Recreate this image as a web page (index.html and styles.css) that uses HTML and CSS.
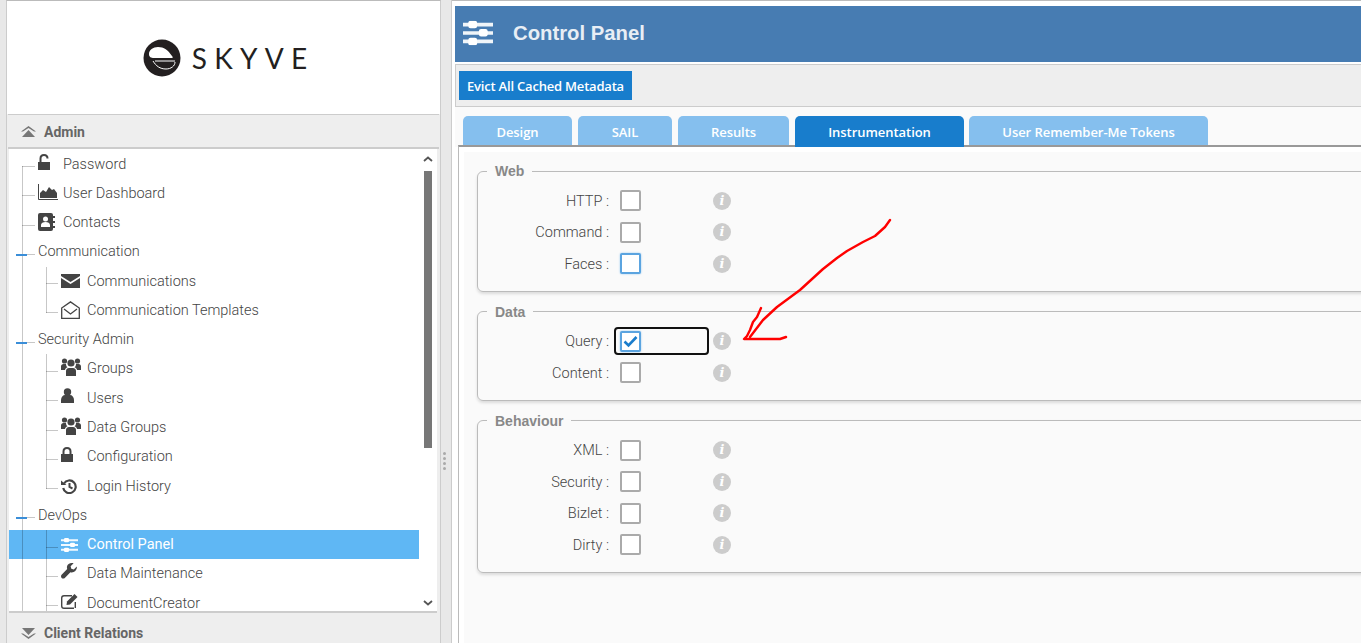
FILE: index.html
```html
<!DOCTYPE html>
<html>
<head>
  <title>Control Panel</title>
  <link rel="stylesheet" href="styles.css">
</head>
<body>
  <div class="page">
    <div class="sidebar">
      <div class="logo-box">
        <svg class="logo-mark" width="38" height="38" viewBox="0 0 38 38">
          <circle cx="19" cy="19" r="18.500" fill="#231f20"/>
          <path d="M6 15c0-4 4-7 9-7 6 0 10 3 14 9 1 1 1 2 0 2H11c-3 0-5-1-5-4z" fill="#fff"/>
          <path d="M32 23c0 4-4 7-9 7-6 0-10-3-13-8" fill="none" stroke="#fff" stroke-width="1"/>
          <path d="M12 22h20" stroke="#fff" stroke-width="1"/>
        </svg>
        <span class="logo-text">SKYVE</span>
      </div>

      <div class="acc-head">
        <svg width="15" height="12" viewBox="0 0 15 12"><path d="M7.500 0L15 5.500h-2L7.500 2 2 5.500H0z M7.500 4L14 11H1z" fill="#777"/></svg>
        <span>Admin</span>
      </div>

      <div class="tree-wrap">
        <div class="tree">
          <div class="row top"><span class="slot"><svg class="ic-unlock" width="13" height="16" viewBox="0 0 13 16"><path d="M0 8h12v8H0z" fill="#444"/><path d="M2.500 8V4.500C2.500 2.500 4 1 6 1s3.500 1.500 3.500 3.500" fill="none" stroke="#444" stroke-width="2"/></svg></span>Password</div>
          <div class="row top"><span class="slot"><svg class="ic-chart" width="20" height="16" viewBox="0 0 20 16"><path d="M.5 0v15.500H20" fill="none" stroke="#444" stroke-width="1"/><path d="M2 14V9l3-3 3 2 3-5 3 3 2-1 3 4v5z" fill="#444"/></svg></span>User Dashboard</div>
          <div class="row top"><span class="slot"><svg class="ic-book" width="17" height="18" viewBox="0 0 17 18"><rect width="15" height="18" rx="2" fill="#444"/><path d="M15 3h2v2h-2zM15 8h2v2h-2zM15 13h2v2h-2z" fill="#444"/><circle cx="7.500" cy="6" r="2.500" fill="#fff"/><path d="M3 14v-2c0-2 2-3 4.500-3s4.500 1 4.500 3v2z" fill="#fff"/></svg></span>Contacts</div>

          <div class="row group">Communication</div>
          <div class="sub">
            <div class="row"><span class="slot"><svg class="ic-mail" width="19" height="14" viewBox="0 0 19 14"><path d="M0 0h19v2L9.500 8 0 2z" fill="#444"/><path d="M0 4l9.500 6L19 4v10H0z" fill="#444"/></svg></span>Communications</div>
            <div class="row"><span class="slot"><svg class="ic-open" width="19" height="18" viewBox="0 0 19 18"><path d="M.7 7L9.500.9 18.300 7v10.300H.7z" fill="none" stroke="#444" stroke-width="1.300"/><path d="M3 8l6.500 5L16 8" fill="none" stroke="#444" stroke-width="1.300"/></svg></span>Communication Templates</div>
          </div>

          <div class="row group">Security Admin</div>
          <div class="sub">
            <div class="row"><span class="slot"><svg class="ic-users" width="20" height="19" viewBox="0 0 20 19"><use href="#users"/></svg></span>Groups</div>
            <div class="row"><span class="slot"><svg class="ic-user" width="13" height="15" viewBox="0 0 13 15"><circle cx="6.500" cy="4" r="3.700" fill="#444"/><path d="M0 15v-3c0-3 2-5 4-5h5c2 0 4 2 4 5v3z" fill="#444"/></svg></span>Users</div>
            <div class="row"><span class="slot"><svg class="ic-users" width="20" height="19" viewBox="0 0 20 19"><use href="#users"/></svg></span>Data Groups</div>
            <div class="row"><span class="slot"><svg class="ic-lock" width="12" height="15" viewBox="0 0 12 15"><path d="M0 7h12v8H0z" fill="#444"/><path d="M2.500 7V4.500C2.500 2.500 4 1 6 1s3.500 1.500 3.500 3.500V7" fill="none" stroke="#444" stroke-width="2"/></svg></span>Configuration</div>
            <div class="row"><span class="slot"><svg class="ic-history" width="16" height="15" viewBox="0 0 16 15"><path d="M3 4.500a6.300 6.300 0 1 1-.8 4.500" fill="none" stroke="#444" stroke-width="2.200"/><path d="M0 1.500l5.500 4.500H0z" fill="#444"/><path d="M8.500 4v4l3 1.500" fill="none" stroke="#444" stroke-width="2"/></svg></span>Login History</div>
          </div>

          <div class="row group">DevOps</div>
          <div class="sub open">
            <div class="row selected"><span class="slot"><svg class="ic-sliders" width="17" height="14" viewBox="0 0 34 28"><use href="#sliders"/></svg></span>Control Panel</div>
            <div class="row"><span class="slot"><svg class="ic-wrench" width="16" height="16" viewBox="0 0 16 16"><path d="M15.800 3.500l-3 3-2.500-.7-.7-2.500 3-3C9.500-.5 6.500.8 6 3.500c-.2 1 0 1.800.2 2.600L.6 11.700c-.8.8-.8 2.200 0 3.200.9.900 2.300.9 3.200 0l5.600-5.600c3.500 1 7-2.200 6.400-5.800z" fill="#444"/></svg></span>Data Maintenance</div>
            <div class="row"><span class="slot"><svg class="ic-edit" width="19" height="15" viewBox="0 0 19 15"><path d="M13 14.300H3c-1.300 0-2.300-1-2.300-2.300V4c0-1.300 1-2.300 2.300-2.300h8M14.300 8v6" fill="none" stroke="#444" stroke-width="1.400"/><path d="M6 7.500L13.500 0l3 3L9 10.500l-3.500.5z" fill="#444"/></svg></span>DocumentCreator</div>
          </div>
        </div>
        <div class="scrollbar">
          <svg class="chev" width="10" height="6" viewBox="0 0 10 6"><path d="M1 5l4-3.500L9 5" fill="none" stroke="#555" stroke-width="1.800"/></svg>
          <div class="track"><div class="thumb"></div></div>
          <svg class="chev down" width="10" height="6" viewBox="0 0 10 6"><path d="M1 1l4 3.500L9 1" fill="none" stroke="#555" stroke-width="1.800"/></svg>
        </div>
      </div>

      <div class="acc-head closed">
        <svg width="15" height="12" viewBox="0 0 15 12"><path d="M7.500 12L15 6.500h-2L7.500 10 2 6.500H0z M7.500 8L14 1H1z" fill="#777"/></svg>
        <span>Client Relations</span>
      </div>
    </div>

    <div class="splitter">
      <span></span><span></span><span></span><span></span>
    </div>

    <div class="main">
      <div class="title-bar">
        <svg width="30" height="26" viewBox="0 0 34 28"><use href="#sliders"/></svg>
        <h1>Control Panel</h1>
      </div>
      <div class="toolbar">
        <button class="action-btn">Evict All Cached Metadata</button>
      </div>
      <div class="tabs">
        <div class="tab">Design</div>
        <div class="tab">SAIL</div>
        <div class="tab">Results</div>
        <div class="tab active">Instrumentation</div>
        <div class="tab last">User Remember-Me Tokens</div>
      </div>
      <div class="tab-panel">
        <div class="tab-inner">
          <fieldset class="box">
            <legend>Web</legend>
            <div class="field"><label>HTTP :</label><span class="check"></span><span class="info">i</span></div>
            <div class="field"><label>Command :</label><span class="check"></span><span class="info">i</span></div>
            <div class="field"><label>Faces :</label><span class="check focused"></span><span class="info">i</span></div>
          </fieldset>
          <fieldset class="box">
            <legend>Data</legend>
            <div class="field">
              <label>Query :</label>
              <span class="check focused"><svg width="15" height="13" viewBox="0 0 15 13"><path d="M1.500 6.500l4 4 8-8.500" fill="none" stroke="#1a7dcc" stroke-width="2.600"/></svg></span>
              <span class="info">i</span>
              <span class="focus-ring"></span>
            </div>
            <div class="field"><label>Content :</label><span class="check"></span><span class="info">i</span></div>
          </fieldset>
          <fieldset class="box">
            <legend>Behaviour</legend>
            <div class="field"><label>XML :</label><span class="check"></span><span class="info">i</span></div>
            <div class="field"><label>Security :</label><span class="check"></span><span class="info">i</span></div>
            <div class="field"><label>Bizlet :</label><span class="check"></span><span class="info">i</span></div>
            <div class="field"><label>Dirty :</label><span class="check"></span><span class="info">i</span></div>
          </fieldset>
        </div>
      </div>
    </div>

    <!-- red arrow scribbled on top of the screenshot -->
    <svg class="scribble" width="1361" height="643" viewBox="0 0 1361 643">
      <path d="M890 220L885 227L875 236L863 242L847 251L837 258L823 269L800 290L777 307L763 320L750 337" fill="none" stroke="#f00" stroke-width="2.400" stroke-linejoin="round" stroke-linecap="round"/>
      <path d="M761 308L757 317L753 322L750 330L747 336L744 339L780 339L786 337" fill="none" stroke="#f00" stroke-width="2.400" stroke-linejoin="round" stroke-linecap="round"/>
    </svg>
  </div>

  <svg class="defs" width="0" height="0">
    <defs>
      <symbol id="sliders" viewBox="0 0 34 28">
        <g fill="#fff">
          <path d="M0 2.500h34v4H0zM0 12h34v4H0zM0 21.500h34v4H0z" opacity=".92"/>
          <rect x="6" y="0" width="10" height="8.500" rx="2.500"/>
          <rect x="18" y="9.500" width="10" height="8.500" rx="2.500"/>
          <rect x="6" y="19.500" width="10" height="8.500" rx="2.500"/>
        </g>
      </symbol>
      <symbol id="users" viewBox="0 0 20 19">
        <g fill="#444">
          <circle cx="3.500" cy="4" r="2.600"/>
          <circle cx="16.500" cy="4" r="2.600"/>
          <circle cx="10" cy="6" r="3.600"/>
          <path d="M0 13V9.500C0 8 1 7 2.500 7H5c0 1.500.5 2.500 1.500 3.300C5 11 4 12 4 13zM20 13V9.500C20 8 19 7 17.500 7H15c0 1.500-.5 2.500-1.500 3.300 1.500.7 2.500 1.700 2.500 2.700z"/>
          <path d="M5 19v-5c0-2 1.500-3 3-3h4c1.500 0 3 1 3 3v5z"/>
        </g>
      </symbol>
    </defs>
  </svg>
</body>
</html>
```

FILE: styles.css
```css
html, body {
  margin: 0;
  height: 100%;
  overflow: hidden;
}

body {
  background-color: #e8e8e8;
  font-family: 'Roboto', sans-serif;
}

.defs {
  position: absolute;
}

.page {
  position: relative;
  display: flex;
  width: 1361px;
  height: 643px;
  overflow: hidden;
  padding-left: 6px;
  box-sizing: border-box;
}

/* Left menu */
.sidebar {
  width: 435px;
  height: 643px;
  flex: none;
  display: flex;
  flex-direction: column;
  overflow: hidden;
  box-sizing: border-box;
  border-left: 1px solid #ccc;
  border-right: 1px solid #ccc;
  border-top: 1px solid #bbb;
  background-color: #eee;
}

.logo-box {
  height: 113px;
  flex: none;
  background-color: #fff;
  display: flex;
  align-items: center;
  justify-content: center;
  gap: 11px;
  padding-left: 3px;
}

.logo-text {
  font-family: 'Lato', sans-serif;
  font-size: 28px;
  letter-spacing: 7.300px;
  color: #231f20;
  margin-right: -7.300px;
}

.acc-head {
  height: 35px;
  flex: none;
  margin: 0 1px;
  box-sizing: border-box;
  border-top: 1px solid #ccc;
  border-bottom: 2px solid #ccc;
  background-color: #eee;
  display: flex;
  align-items: center;
  gap: 8px;
  padding-left: 13px;
  padding-top: 1px;
  font-size: 14px;
  font-weight: 700;
  color: #666;
}

.acc-head.closed {
  height: 36px;
  flex: none;
  border: none;
  padding-top: 3px;
}

.tree-wrap {
  height: 464px;
  flex: none;
  box-sizing: border-box;
  margin-left: 2px;
  margin-right: 3px;
  border-bottom: 2px solid #ccc;
  display: flex;
  background-color: #fff;
}

.tree {
  position: relative;
  flex: 1;
  min-width: 0;
  overflow: hidden;
  padding-top: 0.500px;
  font-size: 14.500px;
  font-weight: 300;
  color: #444;
}

/* main vertical connector */
.tree:before {
  content: "";
  position: absolute;
  left: 13px;
  top: 17px;
  bottom: 0;
  width: 1px;
  background-color: rgba(0,0,0,0.22);
  z-index: 1;
}

.row {
  position: relative;
  display: flex;
  align-items: center;
  height: 29.270px;
  padding-left: 29px;
  white-space: nowrap;
}

.row:before {
  content: "";
  position: absolute;
  left: 13px;
  width: 13px;
  top: calc(50% + 2px);
  height: 1px;
  background-color: rgba(0,0,0,0.22);
  z-index: 1;
}

.slot {
  width: 25px;
  height: 100%;
  flex: none;
  display: flex;
  align-items: center;
}

.slot svg {
  display: block;
  margin-top: -5px;
}

.group:after {
  content: "";
  position: absolute;
  left: 7px;
  width: 11px;
  top: calc(50% + 2px);
  height: 2px;
  background-color: #3a8ed8;
  z-index: 2;
}

.sub {
  position: relative;
}

.sub:before {
  content: "";
  position: absolute;
  left: 37px;
  top: 0;
  bottom: 12px;
  width: 1px;
  background-color: rgba(0,0,0,0.22);
  z-index: 1;
}

.sub.open:before {
  bottom: 0;
}

.sub .row {
  padding-left: 52px;
}

.sub .slot {
  width: 26px;
}

.sub .row:before {
  left: 37px;
  width: 12px;
}

.row.selected {
  background-color: #5fb7f4;
  color: #fff;
  font-weight: 400;
}

.ic-chart, .ic-edit {
  margin-top: -3px !important;
}

.ic-book {
  margin-top: -1px !important;
}

.ic-mail, .ic-history, .ic-sliders, .ic-open {
  margin-top: 0 !important;
}

.scrollbar {
  width: 18px;
  flex: none;
  display: flex;
  flex-direction: column;
  align-items: center;
  background-color: #fff;
}

.chev {
  flex: none;
  margin-top: 7px;
  margin-bottom: 9px;
}

.chev.down {
  margin-top: 10px;
  margin-bottom: 5px;
}

.track {
  flex: 1;
  width: 100%;
  display: flex;
  justify-content: center;
}

.thumb {
  width: 8px;
  height: 277px;
  background-color: #777;
}

/* Splitter between menu and content */
.splitter {
  width: 11px;
  flex: none;
  display: flex;
  flex-direction: column;
  align-items: center;
  justify-content: center;
  gap: 2px;
  padding-top: 278px;
  padding-right: 3px;
  box-sizing: border-box;
  border-right: 1px solid #ccc;
}

.splitter span {
  width: 3px;
  height: 3px;
  border-radius: 50%;
  background-color: #aaa;
}

/* Content */
.main {
  flex: 1;
  min-width: 0;
  border-top: 1px solid #bbb;
  background-color: #fff;
  padding-left: 3px;
  padding-top: 5px;
  display: flex;
  flex-direction: column;
}

.title-bar {
  height: 56px;
  flex: none;
  background-color: #477cb2;
  display: flex;
  align-items: center;
  padding-left: 8px;
  padding-bottom: 2px;
  box-sizing: border-box;
  gap: 20px;
}

.title-bar h1 {
  margin: 0;
  font-family: 'Liberation Sans', sans-serif;
  font-size: 20.300px;
  font-weight: 700;
  color: #e8eef5;
}

.toolbar {
  height: 43px;
  flex: none;
  margin-top: 2px;
  box-sizing: border-box;
  border: 1px solid #ccc;
  border-right: none;
  background-color: #eee;
  display: flex;
  align-items: center;
  padding-left: 3px;
}

.action-btn {
  height: 29px;
  border: none;
  padding: 0 8px;
  background-color: #187dcc;
  color: #fff;
  font-family: 'Open Sans', sans-serif;
  font-size: 13px;
  font-weight: 600;
  letter-spacing: -0.200px;
}

.tabs {
  flex: none;
  display: grid;
  grid-template-columns: 109px 94px 111px 169px 238px;
  column-gap: 6px;
  padding: 9px 0 0 8px;
  background-color: #fafafa;
}

.tab {
  height: 31px;
  display: flex;
  align-items: center;
  justify-content: center;
  background-color: #85bfee;
  border-radius: 5px 5px 0 0;
  color: #fff;
  font-family: 'Open Sans', sans-serif;
  font-size: 13px;
  font-weight: 600;
  letter-spacing: -0.050px;
  white-space: nowrap;
}

.tab.last {
  margin-left: -1px;
}

.tab.active {
  background-color: #187dcc;
  position: relative;
  z-index: 1;
}

.tab-panel {
  flex: 1;
  margin-left: 3px;
  margin-top: -2px;
  border-top: 2px solid #999;
  border-left: 1px solid #bbb;
  background-color: #fff;
  padding: 5px 0 0 5px;
}

.tab-inner {
  height: 100%;
  background-color: #fafafa;
  padding: 11px 0 0 13px;
}

.box {
  margin: 0 -20px 12px 0;
  padding: 6px 0 11px 0;
  border: 1px solid #bbb;
  border-radius: 6px;
  box-shadow: 0 2px 3px rgba(0,0,0,0.12);
}

.box legend {
  margin-left: 9px;
  padding: 0 8px;
  font-family: 'Liberation Sans', sans-serif;
  font-size: 14px;
  font-weight: 700;
  color: #888;
}

.field {
  position: relative;
  display: grid;
  grid-template-columns: 131px 21px 18px;
  column-gap: 11px;
  align-items: center;
  height: 31.500px;
}

.field .info {
  margin-left: 61px;
}

.field label {
  padding-top: 1px;
  text-align: right;
  font-size: 14.500px;
  font-weight: 300;
  color: #444;
}

.check {
  width: 21px;
  height: 21px;
  box-sizing: border-box;
  border: 2px solid #aaa;
  border-radius: 2px;
  background-color: #fff;
  display: flex;
  align-items: center;
  justify-content: center;
}

.check.focused {
  border-color: #5ba4e0;
  box-shadow: 0 0 2px #8fc4ee;
}

.info {
  width: 18px;
  height: 18px;
  border-radius: 50%;
  background-color: #ccc;
  color: #fff;
  font-family: 'DejaVu Serif', serif;
  font-size: 13px;
  font-weight: 700;
  font-style: italic;
  line-height: 18px;
  text-align: center;
}

.focus-ring {
  position: absolute;
  left: 136px;
  top: 1px;
  width: 91px;
  height: 24px;
  border: 2px solid #111;
  border-radius: 4px;
}

.scribble {
  position: absolute;
  left: 0;
  top: 0;
  pointer-events: none;
}
```
